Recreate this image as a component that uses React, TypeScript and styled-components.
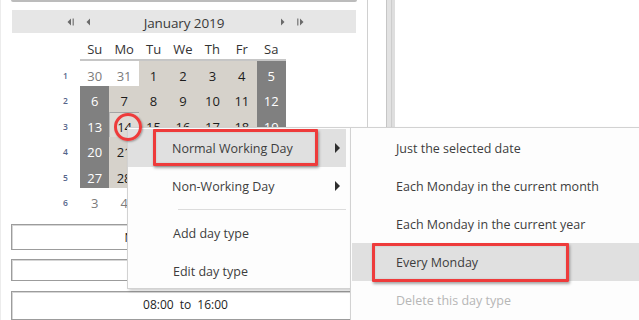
import React from 'react';
import styled, { createGlobalStyle } from 'styled-components';

const GlobalStyle = createGlobalStyle`
  html, body {
    margin: 0;
    padding: 0;
    background: #ffffff;
    font-family: "Open Sans", "Noto Sans", Arial, sans-serif;
  }
  * {
    box-sizing: border-box;
  }
`;

const Screen = styled.div`
  position: relative;
  width: 639px;
  height: 320px;
  display: flex;
  overflow: hidden;
  background: #ffffff;
`;

const LeftPanel = styled.div`
  width: 368px;
  padding: 0 10px;
  border-left: 1px solid #ececec;
  border-right: 1px solid #d0d0d0;
  display: flex;
  flex-direction: column;
`;

const TopEdge = styled.div`
  height: 2px;
  background: #bcbcbc;
  border-radius: 0 0 2px 2px;
`;

const CalHeader = styled.div`
  margin: 8px 1px 0;
  height: 24px;
  padding-top: 3px;
  background: #e6e6e6;
  display: grid;
  grid-template-columns: 1fr auto 1fr;
  align-items: center;
`;

const NavGroup = styled.div<{ $side: 'left' | 'right' }>`
  display: flex;
  align-items: center;
  gap: 11px;
  margin-top: -2px;
  justify-content: ${(p) => (p.$side === 'left' ? 'flex-end' : 'flex-start')};
  padding-left: ${(p) => (p.$side === 'right' ? '56px' : '0')};
  padding-right: ${(p) => (p.$side === 'left' ? '53px' : '0')};
  color: #6a6a6a;
`;

const Title = styled.div`
  font-size: 13.5px;
  color: #3a3a3a;
  letter-spacing: -0.1px;
`;

const DayGrid = styled.div`
  margin: 2px 0 0 40px;
  display: grid;
  grid-template-columns: 29px repeat(7, 29.43px);
  grid-template-rows: 26px repeat(6, 25.4px);
`;

const DayName = styled.div<{ $blank?: boolean }>`
  display: flex;
  align-items: center;
  justify-content: center;
  padding-top: 4px;
  font-size: 13px;
  color: #333333;
  border-bottom: ${(p) => (p.$blank ? 'none' : '2px solid #c6c6c6')};
`;

const WeekNo = styled.div`
  display: flex;
  align-items: center;
  justify-content: center;
  padding-top: 4px;
  font-size: 8.5px;
  font-weight: 600;
  color: #56658a;
`;

type DayKind = 'other' | 'work' | 'weekend' | 'selected';

const dayBg: Record<DayKind, string> = {
  other: '#ffffff',
  work: '#d6d2cb',
  weekend: '#808080',
  selected: '#dedbd5',
};

const dayColor: Record<DayKind, string> = {
  other: '#7c7c7c',
  work: '#1c1c1c',
  weekend: '#ffffff',
  selected: '#1c1c1c',
};

const DayCell = styled.div<{ $kind: DayKind }>`
  display: flex;
  align-items: center;
  justify-content: center;
  padding-top: 5px;
  font-size: 13px;
  background: ${(p) => dayBg[p.$kind]};
  color: ${(p) => dayColor[p.$kind]};
  border-top: ${(p) => (p.$kind === 'selected' ? '1px solid #a4a4a4' : 'none')};
  border-left: ${(p) => (p.$kind === 'selected' ? '1px solid #b8b8b8' : 'none')};
`;

const Field = styled.div<{ $h: number; $mt: number }>`
  margin-top: ${(p) => p.$mt}px;
  height: ${(p) => p.$h}px;
  border: 1px solid #9c9c9c;
  box-shadow: inset 1px 1px 0 #d6d6d6;
  display: flex;
  justify-content: center;
  align-items: flex-start;
  padding-top: ${(p) => (p.$h > 26 ? 4 : 3)}px;
  padding-left: 3px;
  font-size: 12px;
  color: #1e1e1e;
  word-spacing: 3px;
`;

const Gap = styled.div`
  width: 18px;
`;

const Splitter = styled.div`
  width: 9px;
  background: linear-gradient(
    to right,
    #c6c6c6 0px,
    #c6c6c6 1px,
    #e2e2e2 1px,
    #e2e2e2 5px,
    #cdcdcd 5px,
    #cdcdcd 6px,
    #dedede 6px
  );
`;

const RightPanel = styled.div`
  flex: 1;
  background: #ffffff;
`;

const Menu = styled.div<{ $left: number; $top: number; $w: number; $h: number }>`
  position: absolute;
  left: ${(p) => p.$left}px;
  top: ${(p) => p.$top}px;
  width: ${(p) => p.$w}px;
  height: ${(p) => p.$h}px;
  background: #fdfdfd;
  border: 1px solid #d2d2d2;
  box-shadow: 2px 2px 3px rgba(0, 0, 0, 0.18);
  padding-top: 1px;
`;

const MenuItem = styled.div<{ $active?: boolean; $disabled?: boolean; $indent: number; $gutter?: number }>`
  position: relative;
  height: 38px;
  display: flex;
  align-items: center;
  padding-left: ${(p) => p.$indent}px;
  margin-right: ${(p) => p.$gutter ?? 0}px;
  margin-left: ${(p) => (p.$gutter ? 0 : 1)}px;
  background: ${(p) => (p.$active ? '#e0e0e0' : 'transparent')};
  color: ${(p) => (p.$disabled ? '#b6b6b6' : '#3d3d3d')};
  font-size: 12.5px;
  white-space: nowrap;
`;

const SubArrow = styled.span`
  position: absolute;
  right: 6px;
  top: 50%;
  margin-top: -5px;
  width: 0;
  height: 0;
  border-top: 5px solid transparent;
  border-bottom: 5px solid transparent;
  border-left: 5px solid #2e2e2e;
`;

const Separator = styled.div`
  height: 9px;
  margin-left: 50px;
  margin-right: 4px;
  display: flex;
  align-items: center;

  &::after {
    content: '';
    flex: 1;
    height: 1px;
    background: #dcdcdc;
  }
`;

const Callout = styled.div<{ $left: number; $top: number; $w: number; $h: number }>`
  position: absolute;
  left: ${(p) => p.$left}px;
  top: ${(p) => p.$top}px;
  width: ${(p) => p.$w}px;
  height: ${(p) => p.$h}px;
  border: 3px solid #ee3b3b;
  border-radius: 1px;
  box-shadow: 1px 2px 3px rgba(0, 0, 0, 0.35), inset 0 0 2px rgba(0, 0, 0, 0.15);
  pointer-events: none;
`;

const CircleMark = styled(Callout)`
  border-radius: 50%;
  box-shadow: 1px 1px 2px rgba(0, 0, 0, 0.3);
`;

const FirstIcon = ({ flip }: { flip?: boolean }) => (
  <svg width="8" height="8" viewBox="0 0 8 8" style={flip ? { transform: 'scaleX(-1)' } : undefined}>
    <path d="M4 0.5 L0.5 4 L4 7.5 Z" fill="#6a6a6a" />
    <rect x="5.5" y="0.5" width="1.5" height="7" fill="#8a8a8a" />
  </svg>
);

const StepIcon = ({ flip }: { flip?: boolean }) => (
  <svg width="5" height="8" viewBox="0 0 5 8" style={flip ? { transform: 'scaleX(-1)' } : undefined}>
    <path d="M4 0.5 L0.5 4 L4 7.5 Z" fill="#6a6a6a" />
  </svg>
);

const dayNames = ['Su', 'Mo', 'Tu', 'We', 'Th', 'Fr', 'Sa'];

const weeks: { no: number; days: [number, DayKind][] }[] = [
  { no: 1, days: [[30, 'other'], [31, 'other'], [1, 'work'], [2, 'work'], [3, 'work'], [4, 'work'], [5, 'weekend']] },
  { no: 2, days: [[6, 'weekend'], [7, 'work'], [8, 'work'], [9, 'work'], [10, 'work'], [11, 'work'], [12, 'weekend']] },
  { no: 3, days: [[13, 'weekend'], [14, 'selected'], [15, 'work'], [16, 'work'], [17, 'work'], [18, 'work'], [19, 'weekend']] },
  { no: 4, days: [[20, 'weekend'], [21, 'work'], [22, 'work'], [23, 'work'], [24, 'work'], [25, 'work'], [26, 'weekend']] },
  { no: 5, days: [[27, 'weekend'], [28, 'work'], [29, 'work'], [30, 'work'], [31, 'work'], [1, 'other'], [2, 'other']] },
  { no: 6, days: [[3, 'other'], [4, 'other'], [5, 'other'], [6, 'other'], [7, 'other'], [8, 'other'], [9, 'other']] },
];

const subItems = [
  'Just the selected date',
  'Each Monday in the current month',
  'Each Monday in the current year',
  'Every Monday',
];

export default function App() {
  return (
    <Screen>
      <GlobalStyle />
      <LeftPanel>
        <TopEdge />
        <CalHeader>
          <NavGroup $side="left">
            <FirstIcon />
            <StepIcon />
          </NavGroup>
          <Title>January 2019</Title>
          <NavGroup $side="right">
            <StepIcon flip />
            <FirstIcon flip />
          </NavGroup>
        </CalHeader>

        <DayGrid>
          <DayName $blank />
          {dayNames.map((d) => (
            <DayName key={d}>{d}</DayName>
          ))}
          {weeks.map((w) => (
            <React.Fragment key={w.no}>
              <WeekNo>{w.no}</WeekNo>
              {w.days.map(([n, kind], i) => (
                <DayCell key={i} $kind={kind}>
                  {n}
                </DayCell>
              ))}
            </React.Fragment>
          ))}
        </DayGrid>

        <Field $h={27} $mt={11}>Normal Working Day</Field>
        <Field $h={23} $mt={9} />
        <Field $h={30} $mt={10}>08:00 to 16:00</Field>
      </LeftPanel>
      <Gap />
      <Splitter />
      <RightPanel />

      <Menu $left={127} $top={127} $w={224} $h={162}>
        <MenuItem $active $indent={44} $gutter={4}>
          Normal Working Day
          <SubArrow />
        </MenuItem>
        <MenuItem $indent={44} $gutter={4}>
          Non-Working Day
          <SubArrow />
        </MenuItem>
        <Separator />
        <MenuItem $indent={44}>Add day type</MenuItem>
        <MenuItem $indent={44}>Edit day type</MenuItem>
      </Menu>

      <Menu $left={350} $top={127} $w={300} $h={200}>
        {subItems.map((s) => (
          <MenuItem key={s} $active={s === 'Every Monday'} $indent={44}>
            {s}
          </MenuItem>
        ))}
        <MenuItem $disabled $indent={44}>
          Delete this day type
        </MenuItem>
      </Menu>

      <CircleMark $left={114} $top={113} $w={28} $h={28} />
      <Callout $left={153} $top={129} $w={165} $h={37} />
      <Callout $left={372} $top={243} $w={197} $h={39} />
    </Screen>
  );
}
